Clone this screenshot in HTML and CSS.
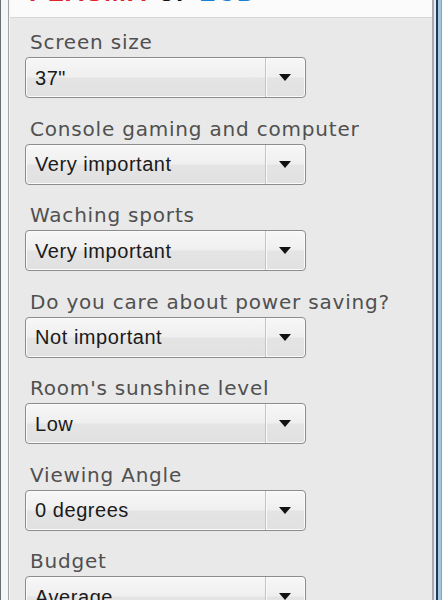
FILE: index.html
```html
<!DOCTYPE html>
<html lang="en">
<head>
  <meta charset="UTF-8">
  <title>Plasma or LCD</title>
  <meta name="viewport" content="width=device-width, initial-scale=1.0">
  <link rel="stylesheet" href="styles.css">
</head>
<body>
  <div class="window">
    <div class="frame-left"></div>

    <div class="panel">
      <header class="title-bar">
        <h1><span class="plasma">PLASMA</span> <span class="or">or</span> <span class="lcd">LCD</span></h1>
      </header>

      <form class="options">
        <div class="field">
          <label>Screen size</label>
          <div class="combo"><span class="value">37"</span><span class="arrow"><svg width="12" height="7" viewBox="0 0 12 7"><polygon points="0,0 12,0 6,7" fill="#111"/></svg></span></div>
        </div>

        <div class="field">
          <label>Console gaming and computer</label>
          <div class="combo"><span class="value">Very important</span><span class="arrow"><svg width="12" height="7" viewBox="0 0 12 7"><polygon points="0,0 12,0 6,7" fill="#111"/></svg></span></div>
        </div>

        <div class="field">
          <label>Waching sports</label>
          <div class="combo"><span class="value">Very important</span><span class="arrow"><svg width="12" height="7" viewBox="0 0 12 7"><polygon points="0,0 12,0 6,7" fill="#111"/></svg></span></div>
        </div>

        <div class="field">
          <label>Do you care about power saving?</label>
          <div class="combo"><span class="value">Not important</span><span class="arrow"><svg width="12" height="7" viewBox="0 0 12 7"><polygon points="0,0 12,0 6,7" fill="#111"/></svg></span></div>
        </div>

        <div class="field">
          <label>Room's sunshine level</label>
          <div class="combo"><span class="value">Low</span><span class="arrow"><svg width="12" height="7" viewBox="0 0 12 7"><polygon points="0,0 12,0 6,7" fill="#111"/></svg></span></div>
        </div>

        <div class="field">
          <label>Viewing Angle</label>
          <div class="combo"><span class="value">0 degrees</span><span class="arrow"><svg width="12" height="7" viewBox="0 0 12 7"><polygon points="0,0 12,0 6,7" fill="#111"/></svg></span></div>
        </div>

        <div class="field">
          <label>Budget</label>
          <div class="combo"><span class="value">Average</span><span class="arrow"><svg width="12" height="7" viewBox="0 0 12 7"><polygon points="0,0 12,0 6,7" fill="#111"/></svg></span></div>
        </div>
      </form>
    </div>

    <div class="frame-right"></div>
  </div>
</body>
</html>
```

FILE: styles.css
```css
* {
  box-sizing: border-box;
  margin: 0;
  padding: 0;
}

body {
  background: #e9e9e9;
  height: 600px;
  overflow: hidden;
}

.window {
  display: flex;
  height: 600px;
}

/* window chrome on both sides */
.frame-left {
  width: 10px;
  flex-shrink: 0;
  background: linear-gradient(to right, #6d6d6d 0 1px, #f4f7fa 1px 8px, #a3a3a3 8px 9px, #f6f6f6 9px);
}

.frame-right {
  width: 10px;
  flex-shrink: 0;
  background: linear-gradient(to right, #a9a9a9 0 2px, #e3ecf3 2px 4px, #1f3a56 4px 6px, #a4c6df 6px 9px, #7ea6c6 9px);
}

.panel {
  flex: 1;
  background: #e9e9e9;
  overflow: hidden;
}

.title-bar {
  height: 18px;
  background: #fbfbfb;
  border-bottom: 1px solid #d6d6d6;
  overflow: hidden;
}

.title-bar h1 {
  font-family: Arial, "Liberation Sans", sans-serif;
  font-size: 26px;
  font-weight: 700;
  line-height: 26px;
  margin-top: -21px;
  padding-left: 19px;
  letter-spacing: 1.5px;
  word-spacing: 3px;
}

.plasma {
  color: #e0242c;
}

.or {
  color: #111;
}

.lcd {
  color: #1b7fd6;
}

.options {
  display: flex;
  flex-direction: column;
  gap: 18.5px;
  padding: 12px 0 0 15px;
}

.field {
  display: flex;
  flex-direction: column;
  gap: 3px;
}

.field label {
  font-family: "DejaVu Sans", Verdana, sans-serif;
  font-size: 20px;
  line-height: 24px;
  letter-spacing: 0.8px;
  color: #505050;
  padding-left: 5px;
}

.combo {
  display: flex;
  width: 281px;
  height: 41px;
  border: 1px solid #8c8c8c;
  border-radius: 4px;
  background: linear-gradient(#f7f7f7 0%, #efefef 48%, #e4e4e4 52%, #e1e1e1 100%);
  box-shadow: inset 0 0 0 1px #fbfbfb;
  font-family: Arial, "Liberation Sans", sans-serif;
  font-size: 20px;
  letter-spacing: 0.55px;
  color: #1a1a1a;
}

.combo .value {
  flex: 1;
  display: flex;
  align-items: center;
  padding-left: 9px;
  padding-top: 1px;
}

.combo .arrow {
  width: 40px;
  display: flex;
  align-items: center;
  justify-content: center;
  border-left: 1px solid #c4c4c4;
  box-shadow: inset 1px 0 0 #fafafa;
  padding-right: 2px;
}
```
